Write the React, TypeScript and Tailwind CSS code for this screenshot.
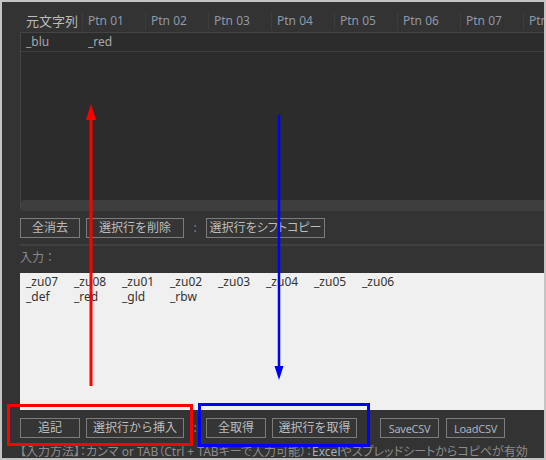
import React from 'react';

const font = "font-['Noto_Sans','Noto_Sans_CJK_JP',sans-serif]";

const cols = ['Ptn 01', 'Ptn 02', 'Ptn 03', 'Ptn 04', 'Ptn 05', 'Ptn 06', 'Ptn 07', 'Ptn 08'];

const inputRows = [
  ['_zu07', '_zu08', '_zu01', '_zu02', '_zu03', '_zu04', '_zu05', '_zu06'],
  ['_def', '_red', '_gld', '_rbw'],
];

function Btn({ w, children, small, tight }: { w: string; children: React.ReactNode; small?: boolean; tight?: boolean }) {
  return (
    <button
      className={`${w} h-5 shrink-0 border border-[#7c7c7c] bg-[#353535] flex items-center justify-center leading-none whitespace-nowrap ${
        small ? 'text-[11px] text-[#a9b0bf] tracking-tight' : 'text-[12px] text-[#bdbdbd]'
      } ${tight ? "[font-feature-settings:'palt']" : ''}`}
    >
      {children}
    </button>
  );
}

function Colon() {
  return <span className="w-[22px] h-5 shrink-0 flex items-center justify-center text-[12px] leading-none text-[#888]">:</span>;
}

export default function App() {
  return (
    <div className={`relative w-[546px] h-[460px] overflow-hidden bg-[#333] border-2 border-[#c4c4c4] ${font}`}>
      <div className="flex flex-col pl-[18px] pt-2">
        {/* header */}
        <div className="flex h-[22px] shrink-0 items-center">
          <div className="w-[63px] shrink-0 pl-1.5 text-[13px] leading-none text-[#bbb] border-r border-[#3d3d3d] h-[18px] flex items-center">元文字列</div>
          {cols.map((c) => (
            <div key={c} className="w-[63px] shrink-0 pl-[5px] text-[12px] leading-none text-[#8f98a8] border-r border-[#3d3d3d] h-[18px] flex items-center whitespace-nowrap overflow-hidden">
              {c}
            </div>
          ))}
        </div>

        {/* grid */}
        <div className="h-[179px] shrink-0 bg-[#2c2c2c] border-l border-t border-[#444] flex flex-col">
          <div className="flex h-[19px] shrink-0 items-center border-b border-[#3c3c3c] text-[12px] leading-none text-[#a8a8a8]">
            <div className="w-[62px] pl-[5px]">_blu</div>
            <div className="w-[63px] pl-[5px]">_red</div>
          </div>
          <div className="flex-1" />
          <div className="h-[11px] shrink-0 bg-[#3e3e3e] rounded-l-[3px]" />
        </div>

        {/* buttons 1 */}
        <div className="flex h-5 shrink-0 items-center mt-[7px]">
          <Btn w="w-[60px]">全消去</Btn>
          <div className="w-1.5" />
          <Btn w="w-[98px]">選択行を削除</Btn>
          <Colon />
          <Btn w="w-[119px]" tight>選択行をシフトコピー</Btn>
        </div>

        <div className="h-[2px] shrink-0 bg-[#404040] mt-[6px]" />

        <div className="h-4 shrink-0 mt-1 text-[12px] text-[#8a8a8a] leading-none flex items-center">入力：</div>

        {/* input */}
        <div className="h-[137px] shrink-0 mt-[7px] bg-[#f0f0f0] pl-1.5 pt-px text-[12px] text-[#333] leading-[14px]">
          {inputRows.map((r, i) => (
            <div key={i} className="flex h-[15px] items-center">
              {r.map((t) => (
                <span key={t} className="w-12 shrink-0">{t}</span>
              ))}
            </div>
          ))}
        </div>

        {/* buttons 2 */}
        <div className="flex h-5 shrink-0 items-center mt-2">
          <Btn w="w-[60px]">追記</Btn>
          <div className="w-1.5" />
          <Btn w="w-[98px]">選択行から挿入</Btn>
          <Colon />
          <Btn w="w-[60px]">全取得</Btn>
          <div className="w-1.5" />
          <Btn w="w-[85px]">選択行を取得</Btn>
          <div className="w-[23px]" />
          <Btn w="w-[59px]" small>SaveCSV</Btn>
          <div className="w-[7px]" />
          <Btn w="w-[59px]" small>LoadCSV</Btn>
        </div>

        <div className="mt-[6px] h-4 shrink-0 text-[12px] text-[#8c8c8c] leading-4 whitespace-nowrap [font-feature-settings:'palt']">
          【入力方法】：カンマ or TAB（Ctrl + TABキーで入力可能）：<span className="text-[#9fb0c8]">Excel</span>やスプレッドシートからコピペが有効
        </div>
      </div>

      {/* annotations */}
      <svg className="absolute -left-[2px] -top-[2px] pointer-events-none" width="546" height="460">
        <rect x="8.5" y="405.5" width="183" height="39" fill="none" stroke="#ff0000" strokeWidth="3" />
        <rect x="199.5" y="404.5" width="169" height="41" fill="none" stroke="#0000ff" strokeWidth="3" />
        <line x1="91" y1="386" x2="91" y2="116" stroke="#ff0000" strokeWidth="3" />
        <polygon points="91,104 86,120 96,120" fill="#ff0000" />
        <line x1="279" y1="115" x2="279" y2="368" stroke="#0000ff" strokeWidth="2.5" />
        <polygon points="279,380 274.5,366 283.5,366" fill="#0000ff" />
      </svg>
    </div>
  );
}
